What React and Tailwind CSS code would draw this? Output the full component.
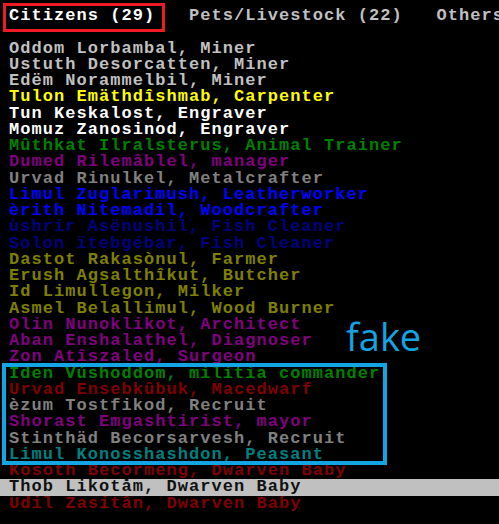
const citizens = [
  ['Oddom Lorbambal, Miner', 'text-[#c0c0c0]'],
  ['Ustuth Desorcatten, Miner', 'text-[#c0c0c0]'],
  ['Edëm Norammelbil, Miner', 'text-[#c0c0c0]'],
  ['Tulon Emäthdîshmab, Carpenter', 'text-[#ffff00]'],
  ['Tun Keskalost, Engraver', 'text-white'],
  ['Momuz Zanosinod, Engraver', 'text-white'],
  ['Mûthkat Ilralsterus, Animal Trainer', 'text-[#008000]'],
  ['Dumed Rilemâblel, manager', 'text-[#800080]'],
  ['Urvad Rinulkel, Metalcrafter', 'text-[#808080]'],
  ['Limul Zuglarimush, Leatherworker', 'text-[#0000ff]'],
  ['èrith Nitemadil, Woodcrafter', 'text-[#0000ff]'],
  ['ùshrir Asënushil, Fish Cleaner', 'text-[#000080]'],
  ['Solon ïtebgébar, Fish Cleaner', 'text-[#000080]'],
  ['Dastot Rakasònul, Farmer', 'text-[#808000]'],
  ['Erush Agsalthîkut, Butcher', 'text-[#808000]'],
  ['Id Limullegon, Milker', 'text-[#808000]'],
  ['Asmel Belallimul, Wood Burner', 'text-[#808000]'],
  ['Olin Nunoklikot, Architect', 'text-[#800080]'],
  ['Aban Enshalathel, Diagnoser', 'text-[#800080]'],
  ['Zon Atîszaled, Surgeon', 'text-[#800080]'],
  ['Iden Vúshoddom, militia commander', 'text-[#008000]'],
  ['Urvad Ensebkûbuk, Macedwarf', 'text-[#800000]'],
  ['èzum Tostfikod, Recruit', 'text-[#808080]'],
  ['Shorast Emgashtirist, mayor', 'text-[#800080]'],
  ['Stinthäd Becorsarvesh, Recruit', 'text-[#808080]'],
  ['Limul Konosshashdon, Peasant', 'text-[#008080]'],
  ['Kosoth Becormeng, Dwarven Baby', 'text-[#800000]'],
  ['Thob Likotåm, Dwarven Baby', 'text-[#111111]', true],
  ['Udil Zasitân, Dwarven Baby', 'text-[#800000]'],
]

export default function App() {
  return (
    <div className="relative h-[524px] w-[499px] overflow-hidden bg-black pt-[8px] font-['Liberation_Mono',monospace] text-[17px] font-bold leading-[16.25px] tracking-[1.05px]">
      <div className="h-[16.25px] whitespace-pre pl-[9px]">
        <span className="text-white">Citizens (29)</span>
        <span className="text-[#c0c0c0]">{'   Pets/Livestock (22)   Others'}</span>
      </div>
      <div className="h-[16.25px]" />
      {citizens.map(([name, color, selected]) => (
        <div
          key={name}
          className={`h-[16.25px] whitespace-pre pl-[9px] ${color} ${selected ? 'bg-[#c0c0c0]' : ''}`}
        >
          {name}
        </div>
      ))}

      {/* annotations drawn over the screen */}
      <div className="absolute left-[3px] top-[3px] h-[29px] w-[162px] border-[3px] border-[#ed1c24]" />
      <div className="absolute left-[2px] top-[363px] h-[102px] w-[385px] border-4 border-[#12a4e3]" />
      <div className="absolute left-[346px] top-[310px] font-['Open_Sans',sans-serif] text-[38px] font-normal leading-[52px] tracking-normal text-[#12a4e3]">
        fake
      </div>
    </div>
  )
}
